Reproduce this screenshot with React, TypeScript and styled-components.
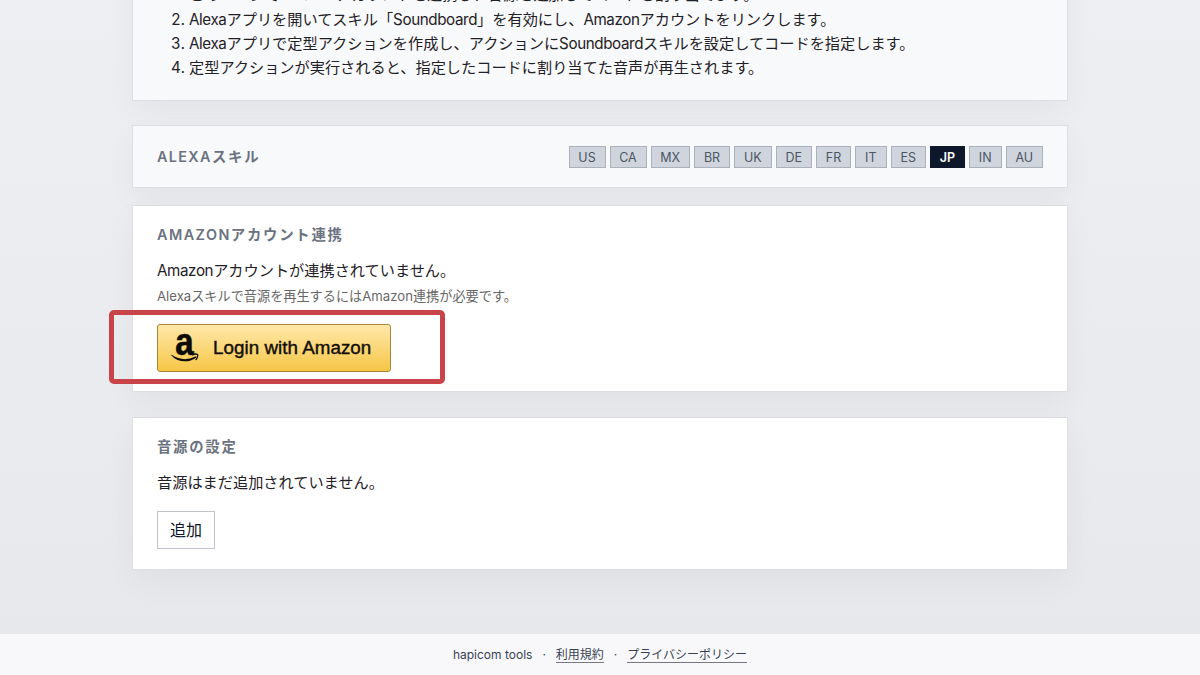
import React from 'react';
import styled, { createGlobalStyle } from 'styled-components';

const Global = createGlobalStyle`
  * { box-sizing: border-box; }
  body {
    margin: 0;
    color: #1f2126;
    font-family: Inter, "Noto Sans CJK JP", sans-serif;
    font-size: 15.2px;
    line-height: 24.3px;
    overflow: hidden;
  }
`;

const Page = styled.div`
  height: 675px;
  display: flex;
  flex-direction: column;
  overflow: hidden;
  background: linear-gradient(180deg, #eeeff2 0%, #e7e8eb 100%);
`;

const Main = styled.main`
  width: 936px;
  margin: 0 auto;
  flex: 1;
  min-height: 0;
`;

const Card = styled.section<{ $tint?: boolean; $h: number; $gap: number }>`
  height: ${p => p.$h}px;
  margin-bottom: ${p => p.$gap}px;
  padding: 17px 24px 0;
  border: 1px solid #dcdee4;
  background: ${p => (p.$tint ? '#f8f9fb' : '#fff')};
  box-shadow: 0 12px 30px rgba(15, 23, 42, 0.045);
`;

const StepsCard = styled(Card)`
  display: flex;
  align-items: flex-end;
  margin-top: -60px;
  padding-bottom: 19.6px;
`;

const Steps = styled.ol`
  margin: 0;
  padding: 0 0 0 32px;
  white-space: nowrap;
`;

const SkillCard = styled(Card)`
  display: flex;
  align-items: center;
  justify-content: space-between;
  padding-top: 0;
`;

const Latin = styled.span<{ $tracking?: number }>`
  letter-spacing: ${p => p.$tracking ?? -0.4}px;
`;

const Heading = styled.h2`
  margin: 0 0 12px;
  color: #6b7280;
  font-size: 14.4px;
  font-weight: 600;
  line-height: 24px;
  letter-spacing: 1.73px;
  ${SkillCard} & { margin: 0; }
`;

const Regions = styled.div`
  display: flex;
  gap: 4px;
`;

const Region = styled.span<{ $w: number; $active?: boolean }>`
  width: ${p => p.$w}px;
  height: 22px;
  border: 1px solid ${p => (p.$active ? '#0f172a' : '#a9b1ba')};
  background: ${p => (p.$active ? '#0f172a' : '#d0d5dd')};
  color: ${p => (p.$active ? '#fff' : '#4b5563')};
  font-size: 12.5px;
  font-weight: ${p => (p.$active ? 600 : 400)};
  line-height: 21px;
  text-align: center;
`;

const Text = styled.p`
  margin: 0;
`;

const Hint = styled.p`
  margin: 0 0 15px;
  color: #666;
  font-size: 13.16px;
  line-height: 26px;
`;

const LoginArea = styled.div`
  position: relative;
  width: 234px;
`;

const Highlight = styled.div`
  position: absolute;
  left: -48px;
  top: -14px;
  width: 336px;
  height: 74px;
  border: 5px solid #c94448;
  border-radius: 5px;
`;

const LoginButton = styled.button`
  width: 234px;
  height: 48px;
  display: flex;
  align-items: center;
  gap: 12px;
  padding: 0 0 0 13px;
  border: 1px solid #a88734;
  border-radius: 3px;
  background: linear-gradient(180deg, #ffe8ab 0%, #f5c646 100%);
  color: #120e04;
  font: 18.8px "Liberation Sans", sans-serif;
  letter-spacing: 0.04px;
  white-space: nowrap;
  -webkit-text-stroke: 0.4px #120e04;
`;

const Mark = styled.svg`
  width: 30px;
  height: 32px;
  overflow: visible;
  flex: none;
`;

const Letter = styled.text`
  font: bold 38px "Liberation Sans", sans-serif;
  fill: #0c0a04;
  stroke: #0c0a04;
  stroke-width: 0.6px;
`;

const AddButton = styled.button`
  display: block;
  width: 58px;
  height: 38px;
  margin-top: 16px;
  padding: 0 0 2px;
  border: 1px solid #c0c4cc;
  background: #fff;
  color: #0f172a;
  font: 16px Inter, "Noto Sans CJK JP", sans-serif;
`;

const Footer = styled.footer`
  height: 41px;
  display: flex;
  align-items: center;
  justify-content: center;
  gap: 10px;
  background: #f8f8fb;
  color: #374151;
  font-size: 12px;
  line-height: 15px;
`;

const Link = styled.a`
  height: 14px;
  line-height: 14px;
  box-shadow: 0 1px 0 #777783;
`;

const regions: [string, number][] = [
  ['US', 37], ['CA', 37], ['MX', 39.5], ['BR', 36], ['UK', 37.5], ['DE', 36.5],
  ['FR', 35], ['IT', 31.5], ['ES', 35.5], ['JP', 35], ['IN', 32.5], ['AU', 37.5],
];

const AmazonMark = () => (
  <Mark viewBox="0 0 30 32" aria-hidden="true">
    <Letter transform="translate(4.2 22.8) scale(0.87 1)">a</Letter>
    <path d="M.8 22.8C8.2 28 17 28.4 24.2 24.6c.9-.4 1.5.5.8 1.1C17.800 31.200 6.800 30.600.500 23.400c-.4-.4-.1-.8.3-.6Z" fill="#0c0a04" />
    <path d="M21.600 22.900c1.700-1 4.200-.8 4.900-.4.600.7-.1 3.600-1.500 5" fill="none" stroke="#0c0a04" strokeWidth="1.300" strokeLinecap="round" strokeLinejoin="round" />
  </Mark>
);

export default function App() {
  return (
    <Page>
      <Global />
      <Main>
        <StepsCard $tint $h={161} $gap={24}>
          <Steps>
            <li>このページで<Latin>Amazon</Latin>アカウントを連携し、音源を追加してコードを割り当てます。</li>
            <li><Latin>Alexa</Latin>アプリを開いてスキル「<Latin>Soundboard</Latin>」を有効にし、<Latin>Amazon</Latin>アカウントをリンクします。</li>
            <li><Latin>Alexa</Latin>アプリで定型アクションを作成し、アクションに<Latin>Soundboard</Latin>スキルを設定してコードを指定します。</li>
            <li>定型アクションが実行されると、指定したコードに割り当てた音声が再生されます。</li>
          </Steps>
        </StepsCard>
        <SkillCard $tint $h={63} $gap={17}>
          <Heading><Latin $tracking={1.35}>ALEXA</Latin>スキル</Heading>
          <Regions>
            {regions.map(([code, w]) => (
              <Region key={code} $w={w} $active={code === 'JP'}>{code}</Region>
            ))}
          </Regions>
        </SkillCard>
        <Card $h={187} $gap={25}>
          <Heading><Latin $tracking={1.45}>AMAZON</Latin>アカウント連携</Heading>
          <Text><Latin>Amazon</Latin>アカウントが連携されていません。</Text>
          <Hint>Alexaスキルで音源を再生するにはAmazon連携が必要です。</Hint>
          <LoginArea>
            <LoginButton><AmazonMark />Login with Amazon</LoginButton>
            <Highlight />
          </LoginArea>
        </Card>
        <Card $h={153} $gap={0}>
          <Heading>音源の設定</Heading>
          <Text>音源はまだ追加されていません。</Text>
          <AddButton>追加</AddButton>
        </Card>
      </Main>
      <Footer>
        <span>hapicom tools</span><span>·</span><Link>利用規約</Link><span>·</span><Link>プライバシーポリシー</Link>
      </Footer>
    </Page>
  );
}
